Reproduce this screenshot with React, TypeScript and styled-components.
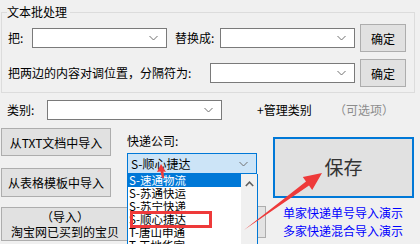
import React from 'react';
import styled, { createGlobalStyle } from 'styled-components';

const FONT = `"Noto Sans CJK SC", "Microsoft YaHei", sans-serif`;

const GlobalStyle = createGlobalStyle`
  html, body {
    margin: 0;
    padding: 0;
    background: #f0f0f0;
  }
  * {
    box-sizing: border-box;
  }
`;

const Page = styled.div`
  position: relative;
  width: 420px;
  height: 244px;
  overflow: hidden;
  padding-top: 4px;
  background: #f0f0f0;
  font-family: ${FONT};
  font-size: 12px;
  line-height: 16px;
  color: #000;
`;

const Group = styled.fieldset`
  margin: 0 0 0 1px;
  width: 414px;
  min-width: 0;
  padding: 4px 0 5px 0;
  border: 1px solid #dcdcdc;
`;

const Legend = styled.legend`
  margin-left: 5px;
  padding: 0 3px 0 0;
  font-size: 12px;
  line-height: 16px;
`;

const Row = styled.div<{ $top?: number; $h: number; $left: number }>`
  display: flex;
  align-items: center;
  height: ${p => p.$h}px;
  margin-top: ${p => p.$top || 0}px;
  padding-left: ${p => p.$left}px;
`;

const Label = styled.span<{ $w?: number; $ml?: number; $muted?: boolean }>`
  flex: none;
  width: ${p => (p.$w ? `${p.$w}px` : 'auto')};
  margin-left: ${p => p.$ml || 0}px;
  white-space: nowrap;
  color: ${p => (p.$muted ? '#8c8c8c' : '#000')};
`;

const Combo = styled.div<{ $w: number; $h?: number; $focused?: boolean }>`
  position: relative;
  flex: none;
  display: flex;
  align-items: center;
  width: ${p => p.$w}px;
  height: ${p => p.$h || 20}px;
  padding-left: 3px;
  background: ${p => (p.$focused ? '#cce4f7' : '#fff')};
  border: 1px solid ${p => (p.$focused ? '#0078d7' : '#7a7a7a')};
`;

const ComboText = styled.span`
  flex: 1;
  white-space: nowrap;
`;

const Chevron = styled.svg`
  flex: none;
  width: 9px;
  height: 6px;
  margin-right: 8px;
`;

const Button = styled.button<{ $w: number; $h: number; $ml?: number; $mt?: number }>`
  flex: none;
  display: flex;
  align-items: center;
  justify-content: center;
  flex-direction: column;
  width: ${p => p.$w}px;
  height: ${p => p.$h}px;
  margin-left: ${p => p.$ml || 0}px;
  margin-top: ${p => p.$mt || 0}px;
  padding: 0;
  background: #e1e1e1;
  border: 1px solid #adadad;
  font-family: ${FONT};
  font-size: 12px;
  line-height: 15px;
  color: #000;
`;

const Bottom = styled.div`
  display: flex;
  align-items: flex-start;
  margin-top: 8px;
`;

const LeftCol = styled.div`
  display: flex;
  flex-direction: column;
  width: 110px;
  margin-left: 1px;
`;

const MidCol = styled.div`
  display: flex;
  flex-direction: column;
  width: 130px;
  margin-left: 16px;
  padding-top: 5px;
`;

const ComboWrap = styled.div`
  position: relative;
  margin-top: 4px;
`;

const DropList = styled.div`
  position: absolute;
  z-index: 2;
  top: 100%;
  left: 0;
  display: flex;
  width: 131px;
  height: 80px;
  background: #fff;
  border: 1px solid #0078d7;
  border-top: none;
`;

const Items = styled.div`
  flex: 1;
  display: flex;
  flex-direction: column;
`;

const Item = styled.div<{ $selected?: boolean }>`
  flex: none;
  height: 13px;
  font-size: 11.5px;
  line-height: 13px;
  padding-left: 1px;
  white-space: nowrap;
  background: ${p => (p.$selected ? '#0078d7' : '#fff')};
  color: ${p => (p.$selected ? '#fff' : '#000')};
`;

const ScrollBar = styled.div`
  flex: none;
  display: flex;
  justify-content: center;
  width: 16px;
  padding-top: 7px;
  background: #f0f0f0;
`;

const Stub = styled.div`
  flex: none;
  width: 9px;
  height: 32px;
  margin-top: 78px;
  background: #e3e3e3;
  border: 1px solid #adadad;
`;

const RightCol = styled.div`
  display: flex;
  flex-direction: column;
  margin-left: 7px;
  padding-top: 9px;
`;

const SaveButton = styled.button`
  width: 141px;
  height: 61px;
  padding: 0 0 2px 0;
  background: #e1e1e1;
  border: 2px solid #0078d7;
  font-family: ${FONT};
  font-size: 19px;
  color: #333;
`;

const Links = styled.div`
  display: flex;
  flex-direction: column;
  margin-top: 6px;
  padding-left: 10px;
`;

const DemoLink = styled.a`
  line-height: 18px;
  font-size: 12px;
  color: #0000ff;
  text-decoration: none;
`;

const Mark = styled.div`
  position: absolute;
  z-index: 3;
  left: 130px;
  top: 211px;
  width: 82px;
  height: 17px;
  border: 3px solid #ee3a3a;
`;

const Overlay = styled.svg`
  position: absolute;
  z-index: 4;
  left: 0;
  top: 0;
  pointer-events: none;
`;

const ChevronDown = () => (
  <Chevron viewBox="0 0 9 6">
    <polyline points="0.5,1 4.5,5 8.5,1" fill="none" stroke="#707070" strokeWidth="1" />
  </Chevron>
);

const couriers = ['S-速通物流', 'S-苏通快运', 'S-苏宁快递', 'S-顺心捷达', 'T-唐山申通', 'T-天地华宇'];

export default function App() {
  return (
    <Page>
      <GlobalStyle />
      <Group>
        <Legend>文本批处理</Legend>
        <Row $h={28} $left={6}>
          <Label $w={24}>把:</Label>
          <Combo $w={135}>
            <ComboText />
            <ChevronDown />
          </Combo>
          <Label $w={45} $ml={8}>替换成:</Label>
          <Combo $w={135}>
            <ComboText />
            <ChevronDown />
          </Combo>
          <Button $w={46} $h={28} $ml={5}>确定</Button>
        </Row>
        <Row $h={28} $top={7} $left={6}>
          <Label $w={202}>把两边的内容对调位置，分隔符为:</Label>
          <Combo $w={145}>
            <ComboText />
            <ChevronDown />
          </Combo>
          <Button $w={46} $h={28} $ml={5}>确定</Button>
        </Row>
      </Group>

      <Row $h={20} $top={7} $left={7}>
        <Label $w={40}>类别:</Label>
        <Combo $w={175}>
          <ComboText />
          <ChevronDown />
        </Combo>
        <Label $w={77} $ml={35}>+管理类别</Label>
        <Label $muted>（可选项）</Label>
      </Row>

      <Bottom>
        <LeftCol>
          <Button $w={110} $h={28}>从TXT文档中导入</Button>
          <Button $w={110} $h={29} $mt={12}>从表格模板中导入</Button>
          <Button $w={128} $h={34} $mt={10}>
            <span>（导入）</span>
            <span>淘宝网已买到的宝贝</span>
          </Button>
        </LeftCol>

        <MidCol>
          <Label>快递公司:</Label>
          <ComboWrap>
            <Combo $w={130} $h={21} $focused>
              <ComboText>S-顺心捷达</ComboText>
              <ChevronDown />
            </Combo>
            <DropList>
              <Items>
                {couriers.map((c, i) => (
                  <Item key={c} $selected={i === 0}>{c}</Item>
                ))}
              </Items>
              <ScrollBar>
                <svg width="9" height="6" viewBox="0 0 9 6">
                  <polyline points="0.8,5 4.5,1.2 8.2,5" fill="none" stroke="#606060" strokeWidth="1.6" />
                </svg>
              </ScrollBar>
            </DropList>
          </ComboWrap>
        </MidCol>

        <Stub />

        <RightCol>
          <SaveButton>保存</SaveButton>
          <Links>
            <DemoLink href="#">单家快递单号导入演示</DemoLink>
            <DemoLink href="#">多家快递混合导入演示</DemoLink>
          </Links>
        </RightCol>
      </Bottom>

      <Mark />
      <Overlay width="420" height="244" viewBox="0 0 420 244">
        <polygon
          points="244,230 309,185.6 312.2,190.1 322,173 302.8,177.1 306,181.6"
          fill="#ee3a3a"
        />
        <polygon points="161,164 166,172 163.5,171.5 164,178 162,178 160.5,171.5 157,172" fill="#ee3a3a" />
      </Overlay>
    </Page>
  );
}
